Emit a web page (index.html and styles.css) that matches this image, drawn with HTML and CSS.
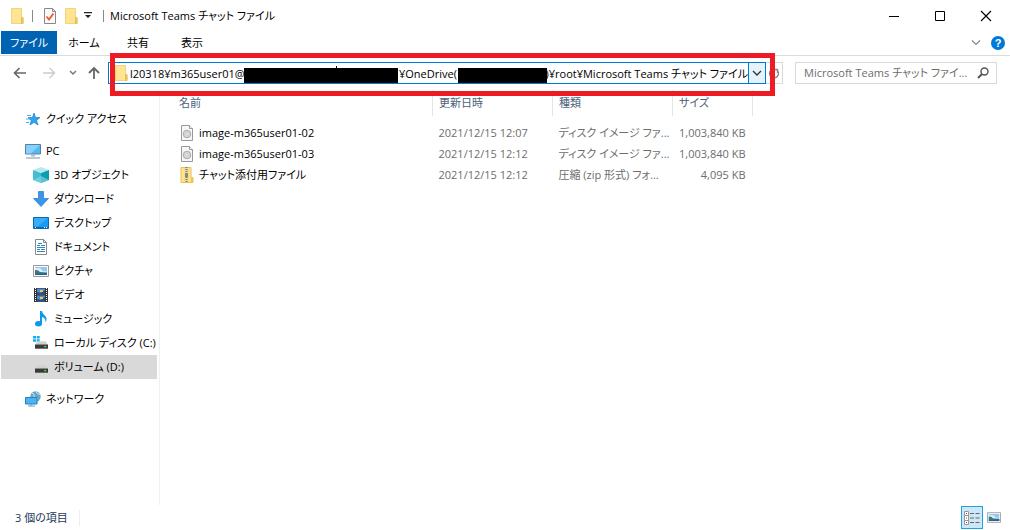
FILE: index.html
```html
<!DOCTYPE html>
<html lang="ja">
  <head>
    <meta charset="UTF-8" />
    <meta name="viewport" content="width=device-width, initial-scale=1.0" />
    <title>Microsoft Teams チャット ファイル</title>
    <link rel="stylesheet" href="styles.css">
  </head>
  <body>
    <!-- shared icons -->
    <svg class="defs" width="0" height="0" aria-hidden="true">
      <symbol id="folder" viewBox="0 0 14 16">
        <path d="M1.500.5h10v9.500H13v5.500H1.500z" fill="#ffe593" stroke="#f3d47a" />
        <path d="M11.500 9.500v6H13v-6z" fill="#f5d475" stroke="#e3bd55" />
      </symbol>
      <symbol id="disc" viewBox="0 0 14 16">
        <path d="M1.500.5h8l3 3v12h-11z" fill="#f7f7f7" stroke="#999" />
        <path d="M9.500.5v3h3" fill="#fff" stroke="#999" />
        <circle cx="7" cy="9" r="3.800" fill="#d5d5d5" stroke="#aaa" />
        <circle cx="7" cy="9" r="1.200" fill="#fff" stroke="#bbb" stroke-width=".6" />
      </symbol>
      <symbol id="picture" viewBox="0 0 16 12">
        <path d="M.5.5h15v11H.5z" fill="#fff" stroke="#999" />
        <path d="M2 2h12v8H2z" fill="#8fc7f5" />
        <path d="M2 3h5l3 3 4 .5V8H2z" fill="#dcecf8" />
        <path d="M2 5q3-.5 5 2l7 .5V10H2z" fill="#3c7b72" />
        <path d="M2 9l12-1v2H2z" fill="#27609d" />
      </symbol>
      <symbol id="drive" viewBox="0 0 14 8">
        <path d="M2.500 0h9L14 4H0z" fill="#d0d0d0" />
        <path d="M0 3.500h14V8H0z" fill="#3b3b3b" />
        <path d="M10 5h2v1.500h-2z" fill="#3cf03c" />
      </symbol>
    </svg>

    <header class="titlebar">
      <svg width="14" height="16"><use href="#folder" /></svg>
      <span class="divider"></span>
      <button class="quick" aria-label="プロパティ">
        <svg width="14" height="16" viewBox="0 0 14 16">
          <path d="M1.500.5h8l3 3v12h-11z" fill="#fafafa" stroke="#888" />
          <path d="M9.500.5v3h3" fill="none" stroke="#888" />
          <path d="M3.500 8.500l2.500 3 4.500-6" fill="none" stroke="#ee5a24" stroke-width="1.800" />
        </svg>
      </button>
      <button class="quick" aria-label="新しいフォルダー">
        <svg width="14" height="16"><use href="#folder" /></svg>
      </button>
      <button class="quick" aria-label="カスタマイズ">
        <svg width="8" height="7" viewBox="0 0 8 7"><path d="M0 0h8v1.300H0zM1 3h6L4 6z" fill="#222" /></svg>
      </button>
      <span class="divider"></span>
      <h1>Microsoft Teams チャット ファイル</h1>
      <div class="window-buttons">
        <button aria-label="最小化"><svg width="12" height="12"><path d="M1 6.500h10" stroke="#000" /></svg></button>
        <button aria-label="最大化"><svg width="12" height="12"><path d="M1.500 1.500h9v9h-9z" fill="none" stroke="#000" /></svg></button>
        <button aria-label="閉じる"><svg width="12" height="12"><path d="M1 1l10 10M11 1L1 11" stroke="#000" stroke-width="1.100" /></svg></button>
      </div>
    </header>

    <nav class="ribbon">
      <a href="#" class="active">ファイル</a>
      <a href="#">ホーム</a>
      <a href="#">共有</a>
      <a href="#">表示</a>
      <div class="ribbon-tools">
        <button aria-label="リボンの展開"><svg width="10" height="6"><path d="M1 .5l4 4 4-4" fill="none" stroke="#888" stroke-width="1.200" /></svg></button>
        <button class="help" aria-label="ヘルプ">?</button>
      </div>
    </nav>

    <div class="toolbar">
      <div class="nav-buttons">
        <button aria-label="戻る"><svg width="14" height="12"><path d="M13 6H2M6.500 1L1.500 6l5 5" fill="none" stroke="#666" stroke-width="1.600" /></svg></button>
        <button aria-label="進む"><svg width="14" height="12"><path d="M1 6h11M7.500 1l5 5-5 5" fill="none" stroke="#ccc" stroke-width="1.400" /></svg></button>
        <button aria-label="最近の場所"><svg width="8" height="6"><path d="M1 1l3 3 3-3" fill="none" stroke="#777" stroke-width="1.500" /></svg></button>
        <button aria-label="上へ"><svg width="12" height="14"><path d="M6 13V2M1 7l5-5 5 5" fill="none" stroke="#666" stroke-width="1.800" /></svg></button>
      </div>
      <div class="address">
        <div class="address-box">
          <svg width="14" height="16"><use href="#folder" /></svg>
          <div class="path">
            <input type="text" aria-label="アドレス" value="l20318¥m365user01@                                                      ¥OneDrive(                               )¥root¥Microsoft Teams チャット ファイル" />
            <span class="redact user"></span>
            <span class="redact tenant"></span>
            <span class="caret"></span>
          </div>
          <button class="drop" aria-label="以前の場所"><svg width="10" height="7"><path d="M1 1l4 4 4-4" fill="none" stroke="#333" stroke-width="1.300" /></svg></button>
        </div>
        <button class="refresh" aria-label="更新"><svg width="12" height="12"><path d="M3 3a4.500 4.500 0 1 0 6 0M9.500 6V2.500H6" fill="none" stroke="#888" stroke-width="1.400" /></svg></button>
        <div class="highlight"></div>
      </div>
      <div class="search">
        <input type="text" aria-label="検索" placeholder="Microsoft Teams チャット ファイ..." />
        <button aria-label="検索を実行"><svg width="12" height="12"><circle cx="7.500" cy="4.500" r="3.500" fill="none" stroke="#555" stroke-width="1.400" /><path d="M5 7l-4 4" stroke="#555" stroke-width="2" /></svg></button>
      </div>
    </div>

    <div class="content">
      <aside class="sidebar">
        <ul>
          <li><a href="#">
            <svg width="16" height="16"><path d="M9 2l1.500 4.500H15l-3.500 3 1.500 4.500-4-2.700L5 14l1.300-4.500L3 6.500h4.500z" fill="#2ea3ee" stroke="#1c7ec4" stroke-width=".7" /><path d="M2 4.500h4M1 8h4M1 11.500h3" stroke="#48b0f2" /></svg>
            クイック アクセス</a></li>
        </ul>
        <ul>
          <li><a href="#">
            <svg width="16" height="16"><path d="M.5 1.500h15v9.500H.5z" fill="#56b8f3" stroke="#587f9d" /><path d="M1 2h14L6 10.500H1z" fill="#86d0fb" /><path d="M6 12h4v1.500H6z" fill="#a8bdca" /><path d="M1 15h14" stroke="#7893a6" /></svg>
            PC</a></li>
          <li class="child"><a href="#">
            <svg width="16" height="16"><path d="M0 3l8-3 8 3-8 3z" fill="#b3eaf2" /><path d="M0 3l8 3v10l-8-3z" fill="#45bcd0" /><path d="M16 3L8 6v10l8-3z" fill="#109caf" /><path d="M0 13l8-4 8 4-8 3z" fill="#89dce5" opacity=".6" /></svg>
            3D オブジェクト</a></li>
          <li class="child"><a href="#">
            <svg width="16" height="16"><path d="M5.500.5h5v7h5L8 15.500.5 7.500h5z" fill="#3a96e8" stroke="#2677c4" stroke-width=".7" /></svg>
            ダウンロード</a></li>
          <li class="child"><a href="#">
            <svg width="16" height="16"><path d="M.5 2.500h15v11H.5z" fill="#159df6" stroke="#0869af" /><path d="M1 3h14L5 11H1z" fill="#38adfb" /><path d="M1 12.500h14" stroke="#0869af" /><path d="M2 12.500h1M11 12.500h1M13 12.500h1" stroke="#fff" /></svg>
            デスクトップ</a></li>
          <li class="child"><a href="#">
            <svg width="16" height="16"><path d="M2.500.5h8l3 3v12h-11z" fill="#fff" stroke="#888" /><path d="M10.500.5v3h3" fill="none" stroke="#888" /><path d="M4 6.500h3M8 6.500h4M4 8.500h8M4 10.500h3M8 10.500h4M4 12.500h8M5 4.500h4" stroke="#2b87c8" /></svg>
            ドキュメント</a></li>
          <li class="child"><a href="#">
            <svg width="16" height="12"><use href="#picture" /></svg>
            ピクチャ</a></li>
          <li class="child"><a href="#">
            <svg width="16" height="16"><path d="M1 1h14v14H1z" fill="#333" /><path d="M4 1.500h8v6H4zM4 8.500h8v6H4z" fill="#4c86d6" /><path d="M4 5l4 1 4-3v4.500H4zM4 12l4 1 4-3v4.500H4z" fill="#254e78" /><path d="M7 3h3v2H7zM7 10h3v2H7z" fill="#f3c439" /><path d="M2.500 1v14M13.500 1v14" stroke="#fff" stroke-dasharray="1 1" /></svg>
            ビデオ</a></li>
          <li class="child"><a href="#">
            <svg width="16" height="16"><ellipse cx="5.500" cy="12.800" rx="3.500" ry="2.700" fill="#0c99ed" /><path d="M7 0h2q.2 2.500 2.500 4.200 3.500 3 1 7.300Q13 7 9 6v7H7z" fill="#0c99ed" /></svg>
            ミュージック</a></li>
          <li class="child"><a href="#">
            <svg width="16" height="16"><path d="M0 1h3v2.500H0zM3.700 1h3v2.500h-3zM0 4.200h3v2.500H0zM3.700 4.200h3v2.500h-3z" fill="#12b2f2" /><use href="#drive" x="2" y="6" width="13" height="8" /></svg>
            ローカル ディスク (C:)</a></li>
          <li class="child selected"><a href="#">
            <svg width="16" height="16"><use href="#drive" x="2" y="6" width="13" height="8" /></svg>
            ボリューム (D:)</a></li>
        </ul>
        <ul>
          <li><a href="#">
            <svg width="16" height="16"><circle cx="10.500" cy="5.500" r="5.200" fill="#6ba5c8" /><path d="M7 2q3 1 2 4l4 2M11 .5q1 3 4.500 3" fill="none" stroke="#d4eaf4" /><path d="M.5 6.500H12V13H.5z" fill="#4ab5f5" stroke="#287fb5" /><path d="M3 15h7M6 13v2" stroke="#6e9ab5" /></svg>
            ネットワーク</a></li>
        </ul>
      </aside>

      <main>
        <table>
          <thead>
            <tr>
              <th class="name">名前</th>
              <th class="date">更新日時</th>
              <th class="type">種類</th>
              <th class="size">サイズ</th>
            </tr>
          </thead>
          <tbody>
            <tr>
              <td><span class="file"><svg width="14" height="16"><use href="#disc" /></svg>image-m365user01-02</span></td>
              <td>2021/12/15 12:07</td>
              <td class="type">ディスク イメージ ファ...</td>
              <td class="size">1,003,840 KB</td>
            </tr>
            <tr>
              <td><span class="file"><svg width="14" height="16"><use href="#disc" /></svg>image-m365user01-03</span></td>
              <td>2021/12/15 12:12</td>
              <td class="type">ディスク イメージ ファ...</td>
              <td class="size">1,003,840 KB</td>
            </tr>
            <tr>
              <td><span class="file"><svg width="14" height="16"><path d="M1 .5h10v10h2v5H1z" fill="#ffe28a" stroke="#e8c254" /><path d="M11 10.500v5h2v-5z" fill="#f1c550" /><path d="M4 1h5v14H4z" fill="#f3dd98" /><path d="M6.500 0v16" stroke="#777" stroke-width="2" stroke-dasharray="1 1" /><path d="M5 6h3v4H5z" fill="#888" /></svg>チャット添付用ファイル</span></td>
              <td>2021/12/15 12:12</td>
              <td class="type">圧縮 (zip 形式) フォ...</td>
              <td class="size">4,095 KB</td>
            </tr>
          </tbody>
        </table>
      </main>
    </div>

    <footer class="statusbar">
      <span class="count">3 個の項目</span>
      <div class="views">
        <button class="on" aria-label="詳細">
          <svg width="16" height="14"><path d="M.5.5h4v13h-4zM.5 4.500h4M.5 9.500h4" fill="#fff" stroke="#999" /><path d="M2 2.500h1M2 7h1M2 11.500h1" stroke="#c33" /><path d="M6 2.500h4M11.500 2.500h4M6 7h4M11.500 7h4M6 11.500h4M11.500 11.500h4" stroke="#666" /></svg>
        </button>
        <button aria-label="大アイコン"><svg width="14" height="11"><use href="#picture" /></svg></button>
      </div>
    </footer>
  </body>
</html>
```
FILE: styles.css
```css
* {
  margin: 0;
  padding: 0;
  box-sizing: border-box;
}
body {
  display: flex;
  flex-direction: column;
  min-height: 100vh;
  background: #fff;
  color: #000;
  font-family: "Open Sans", "Noto Sans CJK JP", sans-serif;
  font-size: 11px;
  line-height: 16px;
  font-feature-settings: "palt";
}
button {
  display: flex;
  align-items: center;
  justify-content: center;
  border: none;
  background: none;
}
input {
  min-width: 0;
  border: none;
  outline: none;
  background: none;
  font: inherit;
  font-feature-settings: inherit;
}
a {
  color: inherit;
  text-decoration: none;
}
ul {
  list-style: none;
}
svg {
  flex: none;
}
.defs {
  position: absolute;
}

/* title bar */
.titlebar {
  display: flex;
  align-items: center;
  height: 31px;
  padding-left: 10px;
}
.divider {
  width: 1px;
  height: 12px;
  margin: 0 6px 0 8px;
  background: #888;
}
.quick {
  min-width: 21px;
}
.quick:nth-of-type(3) {
  min-width: 14px;
}
h1 {
  font-size: 11px;
  font-weight: normal;
}
.window-buttons {
  display: flex;
  margin-left: auto;
  padding-right: 1px;
}
.window-buttons button {
  width: 46px;
  height: 30px;
}

/* ribbon tabs */
.ribbon {
  display: flex;
  height: 25px;
  padding-left: 1px;
  border-bottom: 1px solid #dadbdc;
}
.ribbon a {
  width: 54px;
  height: 23px;
  line-height: 23px;
  text-align: center;
}
.ribbon .active {
  width: 56px;
  background: #0063b1;
  color: #fff;
}
.ribbon-tools {
  display: flex;
  align-items: center;
  gap: 10px;
  margin-left: auto;
  padding-right: 5px;
}
.help {
  width: 14px;
  height: 14px;
  border-radius: 50%;
  background: #0078d7;
  color: #fff;
  font-size: 11px;
  font-weight: bold;
}

/* navigation and address */
.toolbar {
  display: flex;
  align-items: center;
  height: 34px;
  padding-right: 13px;
}
.nav-buttons {
  display: flex;
  align-items: center;
  gap: 15px;
  width: 108px;
  padding-left: 13px;
}
.nav-buttons button:nth-child(n + 3) {
  margin-left: -2px;
  margin-right: -2px;
}
.address {
  position: relative;
  display: flex;
  flex: 1;
  height: 22px;
}
.address-box {
  display: flex;
  align-items: center;
  flex: 1;
  padding-left: 5px;
  border: 1px solid #0078d7;
}
.path {
  position: relative;
  flex: 1;
  height: 20px;
  margin-left: 2px;
}
.path input {
  width: 100%;
  height: 20px;
}
.redact {
  position: absolute;
  top: 5px;
  height: 15px;
  background: #000;
}
.user {
  left: 114px;
  width: 154px;
}
.tenant {
  left: 328px;
  width: 89px;
}
.caret {
  position: absolute;
  top: 3px;
  left: 206px;
  width: 1px;
  height: 14px;
  background: #000;
}
.drop {
  align-self: stretch;
  width: 17px;
  border-left: 1px solid #0078d7;
  background: #e5f1fb;
}
.refresh {
  width: 17px;
  border: 1px solid #d9d9d9;
  border-left: none;
}
/* red frame round the address */
.highlight {
  position: absolute;
  inset: -9px 8px -12px 2px;
  border: 5px solid #ed1c24;
  pointer-events: none;
}
.search {
  display: flex;
  width: 202px;
  height: 22px;
  margin-left: 12px;
  padding: 0 7px 0 8px;
  border: 1px solid #d9d9d9;
}
.search input {
  flex: 1;
}
.search input::placeholder {
  color: #6d6d6d;
}

/* folders and files */
.content {
  display: flex;
  flex: 1;
}
.sidebar {
  width: 160px;
  padding-top: 17px;
  border-right: 1px solid #f0f0f0;
}
.sidebar ul {
  margin-bottom: 8px;
}
.sidebar li {
  margin: 0 2px 0 1px;
}
.sidebar a {
  display: flex;
  align-items: center;
  gap: 5px;
  height: 24px;
  padding-left: 24px;
  white-space: nowrap;
}
.sidebar .child a {
  padding-left: 32px;
}
.selected {
  background: #d9d9d9;
}
main {
  flex: 1;
  padding-left: 13px;
}
table {
  width: 580px;
  table-layout: fixed;
  border-collapse: collapse;
}
th {
  height: 26px;
  padding: 0 7px 0 6px;
  border-right: 1px solid #e5e5e5;
  color: #4c607a;
  font-weight: normal;
  text-align: left;
}
th.date,
th.type {
  width: 120px;
}
th.size {
  width: 80px;
}
tbody::before {
  content: "";
  display: block;
  height: 6px;
}
td {
  height: 21px;
  padding: 0 7px 0 6px;
  color: #6d6d6d;
  white-space: nowrap;
}
td.size {
  text-align: right;
}
.file {
  display: flex;
  align-items: center;
  gap: 5px;
  padding-left: 1px;
  color: #000;
}

/* status bar */
.statusbar {
  display: flex;
  align-items: center;
  justify-content: space-between;
  height: 25px;
  padding: 0 5px 0 15px;
  color: #1e395b;
}
.count {
  padding-right: 11px;
  border-right: 1px solid #eee;
}
.views {
  display: flex;
}
.views button {
  width: 22px;
  height: 23px;
}
.views .on {
  border: 1px solid #26a0da;
  background: #cbe8f6;
}
```
